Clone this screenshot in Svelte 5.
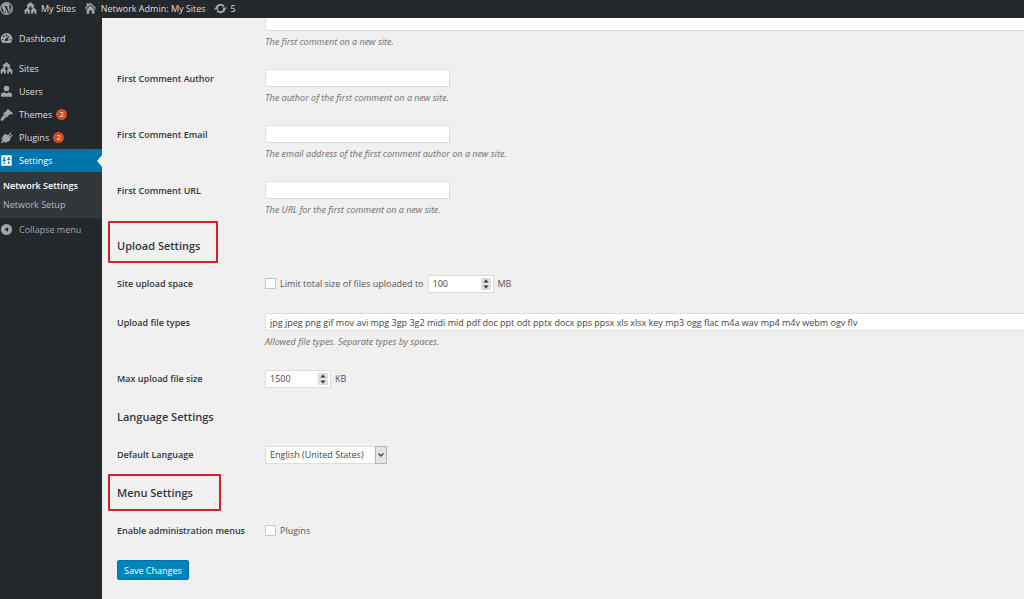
<script lang="ts">
	type MenuItem = { name: string; icon: string; count?: number };

	const menu: MenuItem[] = [
		{ name: 'Sites', icon: 'sites' },
		{ name: 'Users', icon: 'users' },
		{ name: 'Themes', icon: 'themes', count: 2 },
		{ name: 'Plugins', icon: 'plugins', count: 2 }
	];

	const commentFields = [
		{
			id: 'first_comment_author',
			label: 'First Comment Author',
			help: 'The author of the first comment on a new site.'
		},
		{
			id: 'first_comment_email',
			label: 'First Comment Email',
			help: 'The email address of the first comment author on a new site.'
		},
		{
			id: 'first_comment_url',
			label: 'First Comment URL',
			help: 'The URL for the first comment on a new site.'
		}
	];

	let limitUpload = $state(false);
	let uploadSpace = $state(100);
	let fileTypes = $state(
		'jpg jpeg png gif mov avi mpg 3gp 3g2 midi mid pdf doc ppt odt pptx docx pps ppsx xls xlsx key mp3 ogg flac m4a wav mp4 m4v webm ogv flv'
	);
	let maxFileSize = $state(1500);
	let language = $state('en_US');
	let pluginsMenu = $state(false);
</script>

{#snippet icon(name: string)}
	<svg class="icon" viewBox="0 0 20 20" aria-hidden="true">
		{#if name === 'wordpress'}
			<circle cx="10" cy="10" r="9" fill="none" stroke="currentColor" stroke-width="1.8" />
			<path
				d="M2.8 7l4.3 11 2.2-6.4L7.6 7h-1V6h5v1h-1.200l3 9 1.400-4.700c.6-1.900-.9-3.200-.9-4.400 0-1 .8-1.800 1.600-1.800C13.500 2.600 11.500 2 10 2 7.200 2 4.800 3.400 3.400 5.600zM16.900 6.200c.2 2-.3 3.300-.9 5l-2 5.700c4-2.400 4.800-7.200 2.900-10.700zM10.200 11.600L8 17.700c1.400.4 3 .4 4.400-.1z"
			/>
		{:else if name === 'sites'}
			<path d="M10 0l6.500 5.500H15V10h-3.500V7h-3v3H5V5.500H3.500z" />
			<path d="M5 8.500l5 5H9V18H6.200v-3H3.800v3H1v-4.500H0z" />
			<path d="M15 8.500l5 5h-1V18h-2.800v-3h-2.400v3H11v-4.500h-1z" />
		{:else if name === 'home'}
			<path d="M10 1l9 8.500-1.400 1.400L10 4l-7.600 6.900L1 9.500l3-2.800V2h3v2z" />
			<path d="M10 5.500l6 5.500v7h-4v-5H8v5H4v-7z" />
		{:else if name === 'update'}
			<path
				d="M4 10a6 6 0 0 1 11-3M16 10a6 6 0 0 1-11 3"
				fill="none"
				stroke="currentColor"
				stroke-width="3.200"
			/>
			<path d="M12.500 8.500H20L16.200 13zM7.500 11.500H0L3.800 7z" />
		{:else if name === 'dashboard'}
			<path
				fill-rule="evenodd"
				d="M3.800 17A9 9 0 1 1 16.200 17zM9 4v2.500h2V4zM4.300 6.300l1.700 1.700 1.300-1.300-1.700-1.700zM2.800 11v1.800h2.500V11zM14.700 11v1.800h2.500V11zM14.500 5.500L9 10.500a2 2 0 1 0 2.500 2.500z"
			/>
		{:else if name === 'users'}
			<circle cx="10" cy="5.500" r="4.300" />
			<path d="M1.500 18v-3c0-2.500 2.500-4 5-4l3.500 2 3.500-2c2.500 0 5 1.500 5 4v3z" />
		{:else if name === 'themes'}
			<path d="M12 1l8 7-2 2-3.500-.5-3.500 5L4.500 8.500l5-3.500z" />
			<path d="M6 10l4 4-6.500 5.500c-1.500.6-3.100-.9-2.500-2.500z" />
		{:else if name === 'plugins'}
			<path
				d="M12.500 6.500l3.700-4.300 1.500 1.400L14.200 8l1 1 3.300-3.800 1.300 1.300-3.900 4.400c1 3-2 6-5.500 6l-2 1.600-2.500-2.300-3 2.800-1.700-1.800 3-2.800-2.400-2.300 2-1.700c0-3.200 2.600-6.100 6-5.500z"
			/>
		{:else if name === 'settings'}
			<path
				fill-rule="evenodd"
				d="M2 2h16v16H2zM5.500 4.500V9H4v2h5V9H7.500V4.500zM5.500 12.500v3h2v-3zM12.500 4.500v3H11v2h5v-2h-1.500v-3zM12.500 11v4.500h2V11z"
			/>
		{:else if name === 'collapse'}
			<path fill-rule="evenodd" d="M10 1.500a8.500 8.500 0 1 0 0 17 8.500 8.500 0 0 0 0-17zM12.500 6v8L7 10z" />
		{/if}
	</svg>
{/snippet}

{#snippet spinner()}
	<svg class="spinner" viewBox="0 0 10 12" aria-hidden="true">
		<path d="M0 0h10v12H0z" fill="#dcdcdc" />
		<path d="M0 6h10" stroke="#f4f4f4" />
		<path d="M5 1.500L7.500 4.500h-5zM5 10.500l2.500-3h-5z" fill="#333" />
	</svg>
{/snippet}

<header class="adminbar">
	<a class="logo" href="#about" aria-label="About WordPress">{@render icon('wordpress')}</a>
	<a href="#my-sites">{@render icon('sites')}My Sites</a>
	<a href="#network">{@render icon('home')}Network Admin: My Sites</a>
	<a href="#updates">{@render icon('update')}5</a>
</header>

<div class="wrap">
	<nav class="sidebar">
		<a class="item dashboard" href="#dashboard">{@render icon('dashboard')}Dashboard</a>
		{#each menu as item}
			<a class="item" href="#{item.icon}">
				{@render icon(item.icon)}{item.name}
				{#if item.count}<span class="count">{item.count}</span>{/if}
			</a>
		{/each}
		<a class="item current" href="#settings">{@render icon('settings')}Settings</a>
		<div class="submenu">
			<a class="active" href="#network-settings">Network Settings</a>
			<a href="#network-setup">Network Setup</a>
		</div>
		<button class="item collapse" type="button">{@render icon('collapse')}Collapse menu</button>
	</nav>

	<main>
		<form onsubmit={(e) => e.preventDefault()}>
			<div class="row first">
				<span></span>
				<div>
					<textarea class="wide" aria-label="First Comment"></textarea>
					<p class="help">The first comment on a new site.</p>
				</div>
			</div>

			{#each commentFields as field}
				<div class="row">
					<label class="title" for={field.id}>{field.label}</label>
					<div>
						<input class="regular" type="text" id={field.id} />
						<p class="help">{field.help}</p>
					</div>
				</div>
			{/each}

			<h2><span class="marked upload">Upload Settings</span></h2>

			<div class="row">
				<span class="title">Site upload space</span>
				<div class="line">
					<input type="checkbox" id="limit" bind:checked={limitUpload} />
					<label for="limit">Limit total size of files uploaded to</label>
					<span class="number">
						<input type="number" aria-label="Size in megabytes" bind:value={uploadSpace} />
						{@render spinner()}
					</span>
					<span>MB</span>
				</div>
			</div>

			<div class="row">
				<label class="title" for="filetypes">Upload file types</label>
				<div>
					<input class="wide" type="text" id="filetypes" bind:value={fileTypes} />
					<p class="help">Allowed file types. Separate types by spaces.</p>
				</div>
			</div>

			<div class="row">
				<label class="title" for="maxsize">Max upload file size</label>
				<div class="line">
					<span class="number">
						<input type="number" id="maxsize" bind:value={maxFileSize} />
						{@render spinner()}
					</span>
					<span>KB</span>
				</div>
			</div>

			<h2>Language Settings</h2>

			<div class="row">
				<label class="title" for="language">Default Language</label>
				<div class="line">
					<span class="select">
						<select id="language" bind:value={language}>
							<option value="en_US">English (United States)</option>
						</select>
						<svg class="arrow" viewBox="0 0 12 18" aria-hidden="true">
							<path d="M.5.5h11v17H.5z" fill="#e4e4e4" stroke="#b5b5b5" />
							<path d="M3.500 7.500L6 10l2.500-2.500" fill="none" stroke="#444" stroke-width="1.500" />
						</svg>
					</span>
				</div>
			</div>

			<h2><span class="marked menus">Menu Settings</span></h2>

			<div class="row">
				<span class="title">Enable administration menus</span>
				<div class="line">
					<input type="checkbox" id="plugins-menu" bind:checked={pluginsMenu} />
					<label for="plugins-menu">Plugins</label>
				</div>
			</div>

			<button class="save" type="submit">Save Changes</button>
		</form>
	</main>
</div>

<style>
	:global(body) {
		background: #f0f0f0;
		color: #555;
		font-family: 'Open Sans', 'Noto Sans', sans-serif;
		font-size: 9px;
		overflow: hidden;
	}
	a {
		color: inherit;
		text-decoration: none;
	}
	input,
	select,
	textarea,
	button {
		box-sizing: border-box;
		margin: 0;
		font: inherit;
		color: inherit;
	}
	.icon {
		width: 13px;
		height: 13px;
		flex: none;
		fill: currentColor;
		color: #a0a5aa;
	}

	/* top bar */
	.adminbar {
		display: flex;
		align-items: center;
		gap: 8px;
		box-sizing: border-box;
		height: 18px;
		padding-bottom: 2px;
		background: #23282d;
		color: #ddd;
	}
	.adminbar a {
		display: flex;
		align-items: center;
		gap: 4px;
	}
	.adminbar .logo {
		margin-right: 3px;
	}

	.wrap {
		display: flex;
		min-height: calc(100vh - 18px);
	}

	/* side menu */
	.sidebar {
		box-sizing: border-box;
		width: 102px;
		flex: none;
		padding-top: 9px;
		background: #23282d;
		color: #ddd;
	}
	.item {
		display: flex;
		align-items: center;
		gap: 6px;
		height: 23px;
	}
	.dashboard {
		margin-bottom: 7px;
	}
	.count {
		width: 11px;
		margin-left: -2px;
		border-radius: 6px;
		background: #d54e21;
		color: #fff;
		font-size: 7px;
		line-height: 11px;
		text-align: center;
	}
	.current {
		position: relative;
		background: #0073aa;
		color: #fff;
	}
	.current .icon {
		color: #fff;
	}
	.current::after {
		content: '';
		position: absolute;
		top: 6px;
		right: 0;
		border: 6px solid transparent;
		border-left: 0;
		border-right: 5px solid #f0f0f0;
	}
	.submenu {
		padding: 4px 3px;
		background: #32373c;
		color: #b4b9be;
		line-height: 19px;
	}
	.submenu a {
		display: block;
	}
	.submenu .active {
		color: #fff;
		font-weight: 600;
	}
	.collapse {
		padding: 0;
		border: 0;
		background: none;
		color: #a0a5aa;
	}

	/* settings form */
	main {
		flex: 1;
		min-width: 0;
		padding-left: 15px;
	}
	.row {
		display: grid;
		grid-template-columns: 148px 1fr;
		padding: 10px 0;
	}
	.first {
		padding-top: 0;
	}
	.title {
		color: #32373c;
		font-weight: 600;
		line-height: 19px;
	}
	input,
	textarea,
	select {
		display: block;
		height: 18px;
		padding: 0 4px;
		border: 1px solid #ddd;
		border-radius: 0;
		background: #fff;
		color: #444;
	}
	.regular {
		width: 185px;
	}
	.wide {
		width: 100%;
		border-right: 0;
	}
	textarea {
		height: 13px;
		border-top: 0;
		resize: none;
	}
	.help {
		margin: 4px 0 0;
		color: #777;
		font-family: 'Noto Sans', 'Open Sans', sans-serif;
		font-style: italic;
		line-height: 14px;
	}
	h2 {
		margin: 0;
		color: #32373c;
		font-size: 11px;
		font-weight: 600;
		line-height: 37px;
	}
	.marked {
		position: relative;
		display: inline-block;
	}
	.marked::after {
		content: '';
		position: absolute;
		left: -9px;
		border: 2px solid #d02326;
		border-radius: 1px;
	}
	.upload::after {
		top: -6px;
		bottom: 1px;
		width: 106px;
	}
	.menus::after {
		top: 0;
		bottom: 0;
		width: 109px;
	}
	.line {
		display: flex;
		align-items: center;
		gap: 4px;
		height: 19px;
	}
	input[type='checkbox'] {
		appearance: none;
		width: 11px;
		height: 11px;
		padding: 0;
		border-color: #c4c8cb;
	}
	input[type='checkbox']:checked {
		background: #1e8cbe;
	}
	.number,
	.select {
		position: relative;
	}
	input[type='number'] {
		width: 66px;
		appearance: textfield;
	}
	.spinner {
		position: absolute;
		top: 3px;
		right: 3px;
		width: 10px;
		height: 12px;
		pointer-events: none;
	}
	select {
		width: 122px;
		appearance: none;
	}
	.arrow {
		position: absolute;
		top: 0;
		right: 0;
		width: 12px;
		height: 18px;
		pointer-events: none;
	}
	.save {
		height: 20px;
		margin-top: 10px;
		padding: 0 6px;
		border: 1px solid #0073aa;
		border-radius: 2px;
		background: #0085ba;
		color: #fff;
	}
</style>
